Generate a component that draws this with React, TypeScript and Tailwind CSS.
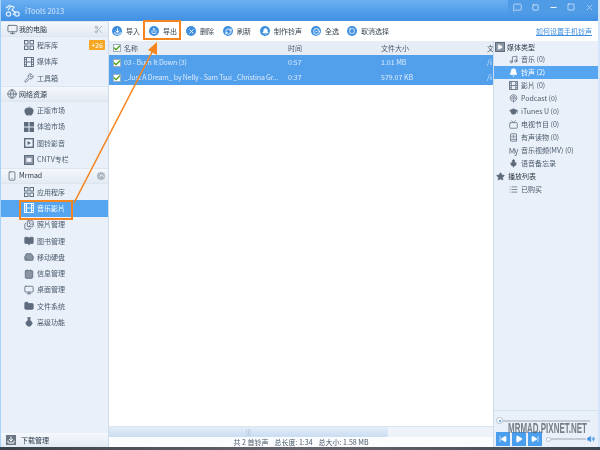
import React from "react";
import { Monitor, Wrench, Globe, Apple, Square, Smartphone, Images, BookOpen, HardDrive, Contact, Folder, FlaskRound, Download, Music, Bell, Podcast, GraduationCap, Tv, BookAudio, Mic, Star, List, Play, SkipBack, SkipForward, Volume2, MessageSquare, Minus, X, Check, Share, RefreshCw, CircleCheck, Scissors, ChevronUp } from "lucide-react";

const font = "font-['Noto_Sans_CJK_TC','Noto_Sans',sans-serif]";
const gray = "#5d6b7c";

const GridIcon = ({ filled }: { filled?: boolean }) => (
  <svg width="10" height="10" viewBox="0 0 10 10" fill={filled ? gray : "none"} stroke={gray} strokeWidth="1">
    <rect x="0.5" y="0.5" width="3.5" height="3.5" />
    <rect x="6" y="0.5" width="3.5" height="3.5" />
    <rect x="0.5" y="6" width="3.5" height="3.5" />
    <rect x="6" y="6" width="3.5" height="3.5" />
  </svg>
);

const FilmIcon = ({ color = gray, size = 10 }: { color?: string; size?: number }) => (
  <svg width={size} height={size} viewBox="0 0 10 10" fill="none" stroke={color} strokeWidth="0.9">
    <rect x="0.5" y="0.5" width="9" height="9" />
    <path d="M2.5 0.5 V9.5 M7.5 0.5 V9.5 M2.5 5 H7.5 M0.5 2.5 H2.5 M0.5 5 H2.5 M0.5 7.5 H2.5 M7.5 2.5 H9.5 M7.5 5 H9.5 M7.5 7.5 H9.5" />
  </svg>
);

const FramedPlay = () => (
  <svg width="10" height="10" viewBox="0 0 10 10" fill="none" stroke={gray}>
    <rect x="0.7" y="0.7" width="8.6" height="8.6" strokeWidth="1.4" />
    <path d="M3.5 3 L7 5 L3.5 7 Z" fill={gray} stroke="none" />
  </svg>
);

const FramedTv = () => (
  <svg width="10" height="10" viewBox="0 0 10 10" fill="#8995a3" stroke={gray}>
    <rect x="0.5" y="0.5" width="9" height="9" />
    <rect x="2.5" y="3" width="5" height="4" fill="#e9f0fa" stroke="none" />
  </svg>
);

const SideHead = ({ icon, label, children }: { icon: React.ReactNode; label: string; children?: React.ReactNode }) => (
  <div className="h-[16.3px] flex items-center pl-[5px] pr-[2px] bg-gradient-to-b from-[#f4f7fb] to-[#e3eaf3] border-y border-[#dde5ef] text-[#2c3845]">
    <span className="w-[12px] flex justify-center">{icon}</span>
    <span className="ml-[1px] flex-1">{label}</span>
    {children}
  </div>
);

const SideRow = ({ icon, label, active }: { icon: React.ReactNode; label: string; active?: boolean }) => (
  <div className={`h-[16.3px] flex items-center pl-[23px] ${active ? "bg-[#56a5f0] text-white" : "text-[#4c5a6a]"}`}>
    <span className="w-[10px] flex justify-center">{icon}</span>
    <span className="ml-[3px]">{label}</span>
  </div>
);

const Tool = ({ icon, label, w }: { icon: React.ReactNode; label: string; w: string }) => (
  <div className={`flex items-center shrink-0 ${w}`}>
    <span className="w-[10px] h-[10px] rounded-full bg-[#3f8fe0] flex items-center justify-center text-white">{icon}</span>
    <span className="ml-[4px] text-[#36424f]">{label}</span>
  </div>
);

const Tick = () => (
  <span className="w-[8px] h-[8px] bg-white border border-[#9fb0c2] flex items-center justify-center">
    <Check size={8} strokeWidth={4} color="#4fa21f" className="shrink-0" />
  </span>
);

const TrackRow = ({ name, time, size }: { name: string; time: string; size: string }) => (
  <div className="h-[15px] flex items-center bg-[#52a0ec] text-[#dbeafb]">
    <span className="w-[15px] shrink-0 pl-[4px]"><Tick /></span>
    <span className="w-[164px] shrink-0 whitespace-nowrap tracking-[-0.16px]">{name}</span>
    <span className="w-[93px] shrink-0">{time}</span>
    <span className="w-[106px] shrink-0">{size}</span>
    <span>/i</span>
  </div>
);

const MediaRow = ({ icon, label, active }: { icon: React.ReactNode; label: string; active?: boolean }) => (
  <div className={`h-[13px] flex items-center pl-[14px] ${active ? "bg-[#56a5f0] text-white" : "text-[#4c5a6a]"}`}>
    <span className="w-[10px] flex justify-center">{icon}</span>
    <span className="ml-[3px] whitespace-nowrap">{label}</span>
  </div>
);

export default function App() {
  return (
    <div className={`relative w-[600px] h-[450px] overflow-hidden flex flex-col bg-[#4a4f57] text-[7px] leading-none ${font}`}>
      <div className="flex flex-col h-[447px] border-l border-l-[#a9d2f8] border-r-2 border-r-[#d5e6fa] blur-[0.35px]">
        {/* title bar */}
        <div className="h-[21px] shrink-0 flex items-center bg-gradient-to-b from-[#6ab0f2] to-[#3f8fe3] text-[#d5e7fa]">
          <svg width="16" height="13" viewBox="0 0 16 13" className="ml-[4px]" fill="none" stroke="#e6f1fd" strokeWidth="1.2">
            <circle cx="3.5" cy="10" r="2.2" /><circle cx="12" cy="10" r="2.2" /><path d="M3 6 L6 2 L9 3 L7 6 L10 8 L8 11 M1 4 L5 1" />
          </svg>
          <span className="ml-[4px] text-[7.5px]">iTools 2013</span>
          <div className="ml-auto h-[14px] self-start flex items-center bg-[#4f9be5]">
            <span className="w-[18px] flex justify-center"><MessageSquare size={9} color="#d5e7fa" /></span>
            <span className="w-[18px] flex justify-center"><Square size={7} color="#d5e7fa" strokeWidth={3} /></span>
            <span className="w-[18px] flex justify-center"><Minus size={9} color="#eef6fe" strokeWidth={3} /></span>
            <span className="w-[18px] flex justify-center"><Square size={8} color="#eef6fe" strokeWidth={2} /></span>
            <span className="w-[18px] flex justify-center"><X size={9} color="#b8d6f5" strokeWidth={2} /></span>
          </div>
        </div>

        <div className="flex-1 flex min-h-0">
          {/* left sidebar */}
          <div className="w-[108px] shrink-0 flex flex-col bg-[#e9f0fa] border-r border-[#cfdcec]">
            <SideHead icon={<Monitor size={11} color={gray} />} label="我的电脑">
              <Scissors size={9} color="#9aa3ad" className="mr-[3px]" />
            </SideHead>
            <div className="relative">
              <SideRow icon={<GridIcon />} label="程序库" />
              <span className="absolute right-[3px] top-[3px] w-[16px] h-[10px] rounded-[1px] bg-[#f7a823] text-white flex items-center justify-center">+26</span>
            </div>
            <SideRow icon={<FilmIcon />} label="媒体库" />
            <SideRow icon={<Wrench size={10} color={gray} />} label="工具箱" />
            <SideHead icon={<Globe size={10} color={gray} />} label="网络资源" />
            <SideRow icon={<Apple size={10} color={gray} fill={gray} />} label="正版市场" />
            <SideRow icon={<GridIcon filled />} label="体验市场" />
            <SideRow icon={<FramedPlay />} label="图铃影音" />
            <SideRow icon={<FramedTv />} label="CNTV专栏" />
            <SideHead icon={<Smartphone size={10} color={gray} />} label="Mrmad">
              <span className="w-[8px] h-[8px] rounded-full bg-[#aeb8c3] flex items-center justify-center mr-[1px]">
                <ChevronUp size={7} color="#fff" strokeWidth={3} />
              </span>
            </SideHead>
            <SideRow icon={<GridIcon />} label="应用程序" />
            <SideRow icon={<FilmIcon color="#fff" />} label="音乐影片" active />
            <SideRow icon={<Images size={10} color={gray} />} label="照片管理" />
            <SideRow icon={<BookOpen size={10} color={gray} fill={gray} />} label="图书管理" />
            <SideRow icon={<HardDrive size={10} color={gray} fill="#8995a3" />} label="移动硬盘" />
            <SideRow icon={<Contact size={10} color={gray} fill="#8995a3" />} label="信息管理" />
            <SideRow icon={<Monitor size={10} color={gray} />} label="桌面管理" />
            <SideRow icon={<Folder size={10} color={gray} fill={gray} />} label="文件系统" />
            <SideRow icon={<FlaskRound size={10} color={gray} fill={gray} />} label="高级功能" />
            <div className="mt-auto h-[14px] flex items-center pl-[5px] bg-gradient-to-b from-[#f5f8fc] to-[#e4ebf4] text-[#2c3845]">
              <span className="w-[10px] h-[10px] bg-[#6a7684] flex items-center justify-center"><Download size={8} color="#fff" strokeWidth={3} /></span>
              <span className="ml-[5px]">下载管理</span>
            </div>
          </div>

          {/* main column */}
          <div className="flex-1 min-w-0 flex flex-col bg-white">
            <div className="h-[20px] shrink-0 flex items-center pl-[3px] pr-[6px]">
              <Tool icon={<Download size={7} strokeWidth={3} />} label="导入" w="w-[37px]" />
              <Tool icon={<Share size={6} strokeWidth={3} />} label="导出" w="w-[37px]" />
              <Tool icon={<X size={7} strokeWidth={3} />} label="删除" w="w-[37px]" />
              <Tool icon={<RefreshCw size={7} strokeWidth={3} />} label="刷新" w="w-[37px]" />
              <Tool icon={<Bell size={7} fill="#fff" />} label="制作铃声" w="w-[51px]" />
              <Tool icon={<CircleCheck size={7} strokeWidth={3} />} label="全选" w="w-[36px]" />
              <Tool icon={<Square size={6} strokeWidth={3} />} label="取消选择" w="w-[64px]" />
              <span className="ml-auto text-[#3f8fe0] underline whitespace-nowrap">如何设置手机铃声</span>
            </div>

            <div className="flex-1 min-h-0 flex">
              <div className="flex-1 min-w-0 flex flex-col">
                <div className="h-[14px] shrink-0 flex items-center bg-[#e6edf6] text-[#4c5a6a]">
                  <span className="w-[15px] shrink-0 pl-[4px]"><Tick /></span>
                  <span className="w-[164px] shrink-0">名称</span>
                  <span className="w-[93px] shrink-0">时间</span>
                  <span className="w-[106px] shrink-0">文件大小</span>
                  <span>文</span>
                </div>
                <TrackRow name="03 - Burn It Down (3)" time="0:57" size="1.01 MB" />
                <TrackRow name="_Just A Dream_ by Nelly - Sam Tsui _Christina Gr..." time="0:37" size="579.07 KB" />
                <div className="flex-1 bg-white" />
                <div className="h-[11px] shrink-0 bg-[#eef3f9] border-t border-[#dbe5f0] flex">
                  <div className="w-[279px] rounded-r-[2px] bg-gradient-to-b from-[#e4edf8] to-[#c9ddf2] flex items-center justify-center text-[#a3b7cc] text-[6px]">|||</div>
                </div>
                <div className="h-[10px] shrink-0 flex items-center justify-center gap-[6px] bg-[#fbfcfe] text-[#4c5a6a]">
                  <span>共 2 首铃声</span>
                  <span>总长度: 1:34</span>
                  <span>总大小: 1.58 MB</span>
                </div>
              </div>

              {/* right panel */}
              <div className="w-[105px] shrink-0 flex flex-col bg-[#e9f0fa] border-l border-[#cfdcec]">
                <div className="h-[12px] flex items-center pl-[1px] text-[#2c3845]">
                  <span className="w-[10px] h-[10px] border border-[#5d6b7c] bg-[#8995a3] flex items-center justify-center"><Play size={6} color="#fff" fill="#fff" /></span>
                  <span className="ml-[2px]">媒体类型</span>
                </div>
                <MediaRow icon={<Music size={9} color={gray} />} label="音乐 (0)" />
                <MediaRow icon={<Bell size={9} color="#fff" fill="#fff" />} label="铃声 (2)" active />
                <MediaRow icon={<FilmIcon size={9} />} label="影片 (0)" />
                <MediaRow icon={<Podcast size={9} color={gray} />} label="Podcast (0)" />
                <MediaRow icon={<GraduationCap size={9} color={gray} fill={gray} />} label="iTunes U (0)" />
                <MediaRow icon={<Tv size={9} color={gray} />} label="电视节目 (0)" />
                <MediaRow icon={<BookAudio size={9} color={gray} />} label="有声读物 (0)" />
                <MediaRow icon={<span className="text-[8px] tracking-[-1px] text-[#5d6b7c]">My</span>} label="音乐视频(MV) (0)" />
                <MediaRow icon={<Mic size={9} color={gray} fill={gray} />} label="语音备忘录" />
                <div className="h-[13px] flex items-center pl-[2px] text-[#2c3845]">
                  <Star size={9} color={gray} fill={gray} />
                  <span className="ml-[3px]">播放列表</span>
                </div>
                <MediaRow icon={<List size={9} color={gray} />} label="已购买" />
                <div className="mt-auto h-[37px] border-t border-[#d6e1ee] flex flex-col pl-[2px] pr-[3px]">
                  <div className="mt-[6px] flex items-center">
                    <span className="w-[7px] h-[7px] rounded-full bg-white border border-[#b4c0cd] flex items-center justify-center"><span className="w-[2px] h-[2px] rounded-full bg-[#3f8fe0]" /></span>
                    <span className="flex-1 h-[2px] bg-[#c3ccd6] mr-[5px]" />
                  </div>
                  <div className="mt-[8px] flex items-center">
                    <span className="w-[14px] h-[14px] bg-[#4a9eee] flex items-center justify-center mr-[2px]"><SkipBack size={8} color="#fff" fill="#fff" /></span>
                    <span className="w-[14px] h-[14px] bg-[#4a9eee] flex items-center justify-center mr-[2px]"><Play size={8} color="#fff" fill="#fff" /></span>
                    <span className="w-[14px] h-[14px] bg-[#4a9eee] flex items-center justify-center"><SkipForward size={8} color="#fff" fill="#fff" /></span>
                    <span className="ml-[4px] w-[5px] h-[5px] rounded-full bg-white border border-[#b4c0cd]" />
                    <span className="flex-1 h-[2px] bg-[#c3ccd6]" />
                    <Volume2 size={8} color="#3f8fe0" fill="#3f8fe0" className="ml-[1px]" />
                  </div>
                </div>
              </div>
            </div>
          </div>
        </div>
      </div>

      {/* desktop peeking out under the window */}
      <div className="h-[3px] bg-gradient-to-r from-[#39424a] via-[#6a6670] to-[#3c4650]" />

      {/* tutorial annotation drawn over the screenshot */}
      <div className="absolute left-[143px] top-[20px] w-[38px] h-[20px] border-2 border-[#f5851f]" />
      <div className="absolute left-[19px] top-[200px] w-[54px] h-[20px] border-2 border-[#f5851f]" />
      <svg className="absolute left-0 top-0" width="600" height="450" fill="none">
        <path d="M74 203 L152 52" stroke="#f5851f" strokeWidth="1.6" />
        <path d="M157 42 L148 50 L157 55 Z" fill="#f5851f" />
      </svg>
      <span className="absolute left-[508px] top-[421px] font-['Liberation_Sans',sans-serif] font-bold text-[14px] text-[#5c6066]/80 scale-x-[0.57] origin-left whitespace-nowrap">MRMAD.PIXNET.NET</span>
    </div>
  );
}
